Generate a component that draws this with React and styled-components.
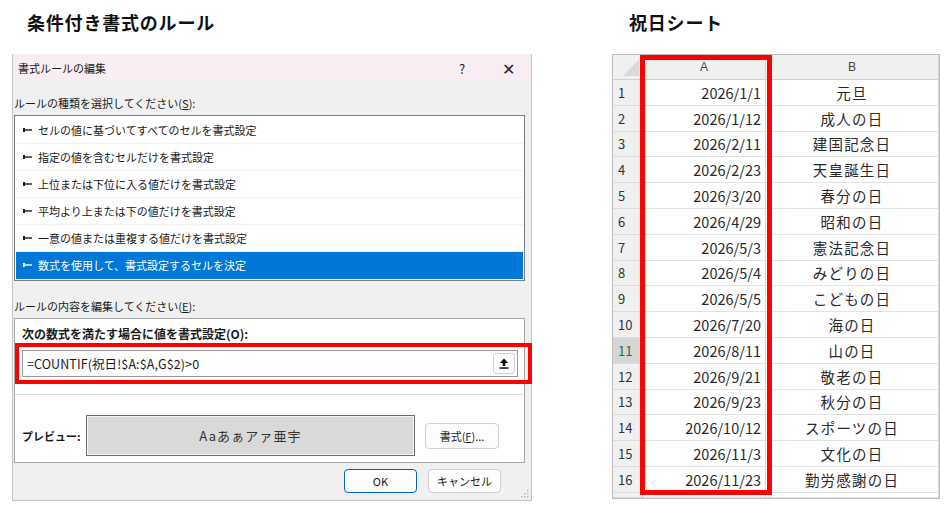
import React from 'react';
import styled, {createGlobalStyle} from 'styled-components';

const GlobalStyle = createGlobalStyle`
  html, body {
    margin: 0;
    padding: 0;
    background: #ffffff;
  }
  body {
    font-family: "Noto Sans CJK JP", "Noto Sans", sans-serif;
    color: #1a1a1a;
  }
`;

const Page = styled.div`
  width: 949px;
  height: 527px;
  display: flex;
  padding-left: 12px;
  box-sizing: border-box;
  overflow: hidden;
`;

const LeftCol = styled.div`
  width: 520px;
  display: flex;
  flex-direction: column;
`;

const RightCol = styled.div`
  width: 328px;
  margin-left: 80px;
  display: flex;
  flex-direction: column;
`;

const Heading = styled.div`
  height: 54px;
  box-sizing: border-box;
  padding: 10px 0 0 ${p => p.$indent}px;
  font-size: 18px;
  line-height: 24px;
  font-weight: 700;
  letter-spacing: 0.8px;
  color: #111;
`;

/* ---------- dialog ---------- */

const Dialog = styled.div`
  width: 520px;
  height: 447px;
  box-sizing: border-box;
  border: 1px solid #c4c4c4;
  border-top: none;
  background: #f0f0f0;
  display: flex;
  flex-direction: column;
  font-size: 11px;
  position: relative;
`;

const TitleBar = styled.div`
  height: 28px;
  background: #f8edf2;
  display: flex;
  align-items: center;
  padding: 0 0 0 5px;
  font-size: 11px;
`;

const TitleText = styled.span`
  flex: 1;
`;

const TitleBtn = styled.span`
  width: 46px;
  text-align: center;
  font-size: ${p => p.$size}px;
  color: #222;
`;

const Label = styled.div`
  margin: ${p => p.$top}px 0 0 1px;
  line-height: 16px;
  height: 16px;
  u { text-decoration: underline; }
`;

const ListBox = styled.div`
  margin: 4px 0 0 1px;
  width: 511px;
  height: 166px;
  box-sizing: border-box;
  border: 1px solid #7d7d7d;
  background: #fff;
  padding: 1px;
  display: flex;
  flex-direction: column;
`;

const ListItem = styled.div`
  height: 27px;
  box-sizing: border-box;
  display: flex;
  align-items: center;
  gap: 6px;
  padding-left: 7px;
  border-bottom: 1px solid ${p => (p.$selected ? '#0078d7' : '#f0f0f0')};
  background: ${p => (p.$selected ? '#0078d7' : '#fff')};
  color: ${p => (p.$selected ? '#fff' : '#1a1a1a')};
  font-size: 11px;
`;

const GroupBox = styled.div`
  margin: 4px 0 0 1px;
  width: 511px;
  height: 145px;
  box-sizing: border-box;
  border: 1px solid #a8a8a8;
  background: #fff;
  display: flex;
  flex-direction: column;
`;

const GroupLabel = styled.div`
  padding: 7px 0 0 7px;
  font-weight: 700;
  font-size: 12px;
  line-height: 16px;
`;

const Highlight = styled.div`
  margin: 1px -8px 0 0;
  border: 4px solid #ff0000;
  padding: 3px 10px 3px 3px;
`;

const FormulaInput = styled.div`
  height: 27px;
  box-sizing: border-box;
  border: 1px solid #9a9a9a;
  background: #fff;
  display: flex;
  align-items: center;
  padding: 0 2px 0 4px;
  font-size: 12.5px;
`;

const FormulaText = styled.span`
  flex: 1;
  letter-spacing: 0.1px;
`;

const CollapseBtn = styled.span`
  width: 22px;
  height: 21px;
  box-sizing: border-box;
  border: 1px solid #cfcfcf;
  border-radius: 3px;
  display: flex;
  align-items: center;
  justify-content: center;
`;

const Separator = styled.div`
  margin: 10px 1px 0 0;
  height: 1px;
  background: #d9d9d9;
`;

const PreviewRow = styled.div`
  margin-top: 20px;
  display: flex;
  align-items: center;
  padding-left: 7px;
`;

const PreviewLabel = styled.span`
  width: 64px;
  font-size: 11px;
  font-weight: 700;
`;

const PreviewBox = styled.div`
  width: 329px;
  height: 41px;
  box-sizing: border-box;
  border: 1px solid #6e6e6e;
  box-shadow: inset 0 0 0 1px #f4f4f4;
  background: #d9d9d9;
  display: flex;
  align-items: center;
  justify-content: center;
  font-size: 13px;
  letter-spacing: 1.1px;
  color: #333;
`;

const Button = styled.button`
  width: ${p => p.$w}px;
  height: ${p => p.$h}px;
  box-sizing: border-box;
  border: 1px solid ${p => (p.$primary ? '#0067c0' : '#d0d0d0')};
  border-radius: 4px;
  background: #fdfdfd;
  font-family: inherit;
  font-size: 11px;
  color: #1a1a1a;
  padding: 0;
  margin-left: ${p => p.$ml || 0}px;
  u { text-decoration: underline; }
`;

const ButtonRow = styled.div`
  margin-top: 6px;
  display: flex;
  justify-content: flex-end;
  gap: 11px;
  padding-right: 30px;
`;

const Grip = styled.svg`
  position: absolute;
  right: 2px;
  bottom: 2px;
`;

const Bullet = () => (
  <svg width="9" height="6" viewBox="0 0 9 6">
    <rect x="0" y="1" width="2" height="4" fill="currentColor"/>
    <rect x="0" y="2.3" width="9" height="1.4" fill="currentColor"/>
  </svg>
);

/* ---------- spreadsheet ---------- */

const Sheet = styled.div`
  position: relative;
  width: 328px;
  box-sizing: border-box;
  border: 1px solid #bdbdbd;
  display: grid;
  grid-template-columns: 30px 123px 1fr;
  grid-template-rows: 25px repeat(16, 25.8px) 5px;
  background: #fff;
`;

const Corner = styled.div`
  background: #f0f0f0;
  border-right: 1px solid #d0d0d0;
  border-bottom: 1px solid #d0d0d0;
  overflow: hidden;
`;

const ColHead = styled.div`
  background: #f0f0f0;
  border-right: 1px solid #d4d4d4;
  border-bottom: 1px solid #d0d0d0;
  display: flex;
  align-items: center;
  justify-content: center;
  font-family: "Liberation Sans", Arial, sans-serif;
  font-size: 12px;
  color: #444;
`;

const RowHead = styled.div`
  background: ${p => (p.$active ? '#d6d6d6' : '#f0f0f0')};
  color: ${p => (p.$active ? '#217346' : '#333')};
  border-right: 1px solid ${p => (p.$active ? '#b5b5b5' : '#c8c8c8')};
  border-bottom: 1px solid #dcdcdc;
  display: flex;
  align-items: center;
  padding-left: 5px;
  font-size: 13px;
`;

const Cell = styled.div`
  border-right: 1px solid #d8d8d8;
  border-bottom: 1px solid #e2e2e2;
  display: flex;
  align-items: center;
  justify-content: ${p => (p.$align === 'right' ? 'flex-end' : 'center')};
  padding-right: ${p => (p.$align === 'right' ? '4px' : '0')};
  font-size: 14.5px;
  letter-spacing: ${p => (p.$align === 'right' ? '0' : '1.2px')};
  color: #2a2a2a;
`;

const ColumnMark = styled.div`
  position: absolute;
  left: 27px;
  top: 0;
  width: 132px;
  height: 440px;
  box-sizing: border-box;
  border: 5px solid #ff0000;
  pointer-events: none;
`;

const rules = [
  'セルの値に基づいてすべてのセルを書式設定',
  '指定の値を含むセルだけを書式設定',
  '上位または下位に入る値だけを書式設定',
  '平均より上または下の値だけを書式設定',
  '一意の値または重複する値だけを書式設定',
  '数式を使用して、書式設定するセルを決定',
];

const holidays = [
  ['2026/1/1', '元旦'],
  ['2026/1/12', '成人の日'],
  ['2026/2/11', '建国記念日'],
  ['2026/2/23', '天皇誕生日'],
  ['2026/3/20', '春分の日'],
  ['2026/4/29', '昭和の日'],
  ['2026/5/3', '憲法記念日'],
  ['2026/5/4', 'みどりの日'],
  ['2026/5/5', 'こどもの日'],
  ['2026/7/20', '海の日'],
  ['2026/8/11', '山の日'],
  ['2026/9/21', '敬老の日'],
  ['2026/9/23', '秋分の日'],
  ['2026/10/12', 'スポーツの日'],
  ['2026/11/3', '文化の日'],
  ['2026/11/23', '勤労感謝の日'],
];

export default function App() {
  return (
    <Page>
      <GlobalStyle/>
      <LeftCol>
        <Heading $indent={15}>条件付き書式のルール</Heading>
        <Dialog>
          <TitleBar>
            <TitleText>書式ルールの編集</TitleText>
            <TitleBtn $size={13}>?</TitleBtn>
            <TitleBtn $size={16}>✕</TitleBtn>
          </TitleBar>
          <Label $top={13}>ルールの種類を選択してください(<u>S</u>):</Label>
          <ListBox>
            {rules.map((r, i) => (
              <ListItem key={i} $selected={i === rules.length - 1}>
                <Bullet/>
                <span>{r}</span>
              </ListItem>
            ))}
          </ListBox>
          <Label $top={17}>ルールの内容を編集してください(<u>E</u>):</Label>
          <GroupBox>
            <GroupLabel>次の数式を満たす場合に値を書式設定(O):</GroupLabel>
            <Highlight>
              <FormulaInput>
                <FormulaText>=COUNTIF(祝日!$A:$A,G$2)&gt;0</FormulaText>
                <CollapseBtn>
                  <svg width="10" height="11" viewBox="0 0 10 11">
                    <path d="M5 0.5 L9.2 5 H6.4 V8 H3.6 V5 H0.8 Z" fill="#111"/>
                    <rect x="0.5" y="9.3" width="9" height="1.5" fill="#111"/>
                  </svg>
                </CollapseBtn>
              </FormulaInput>
            </Highlight>
            <Separator/>
            <PreviewRow>
              <PreviewLabel>プレビュー:</PreviewLabel>
              <PreviewBox>Aaあぁアァ亜宇</PreviewBox>
              <Button $w={74} $h={26} $ml={10}>書式(<u>F</u>)...</Button>
            </PreviewRow>
          </GroupBox>
          <ButtonRow>
            <Button $w={73} $h={24} $primary>OK</Button>
            <Button $w={73} $h={24}>キャンセル</Button>
          </ButtonRow>
          <Grip width="8" height="8" viewBox="0 0 8 8">
            <g fill="#b0b0b0">
              <rect x="6" y="0" width="1.4" height="1.4"/>
              <rect x="3" y="3" width="1.4" height="1.4"/>
              <rect x="6" y="3" width="1.4" height="1.4"/>
              <rect x="0" y="6" width="1.4" height="1.4"/>
              <rect x="3" y="6" width="1.4" height="1.4"/>
              <rect x="6" y="6" width="1.4" height="1.4"/>
            </g>
          </Grip>
        </Dialog>
      </LeftCol>
      <RightCol>
        <Heading $indent={17}>祝日シート</Heading>
        <Sheet>
          <Corner>
            <svg width="30" height="25" viewBox="0 0 30 25" style={{display: 'block'}}>
              <polygon points="26,4 26,21 10,21" fill="#d9d9d9"/>
            </svg>
          </Corner>
          <ColHead>A</ColHead>
          <ColHead>B</ColHead>
          {holidays.map(([d, n], i) => (
            <React.Fragment key={d}>
              <RowHead $active={i === 10}>{i + 1}</RowHead>
              <Cell $align="right">{d}</Cell>
              <Cell>{n}</Cell>
            </React.Fragment>
          ))}
          <RowHead/>
          <Cell $align="right"/>
          <Cell/>
          <ColumnMark/>
        </Sheet>
      </RightCol>
    </Page>
  );
}
